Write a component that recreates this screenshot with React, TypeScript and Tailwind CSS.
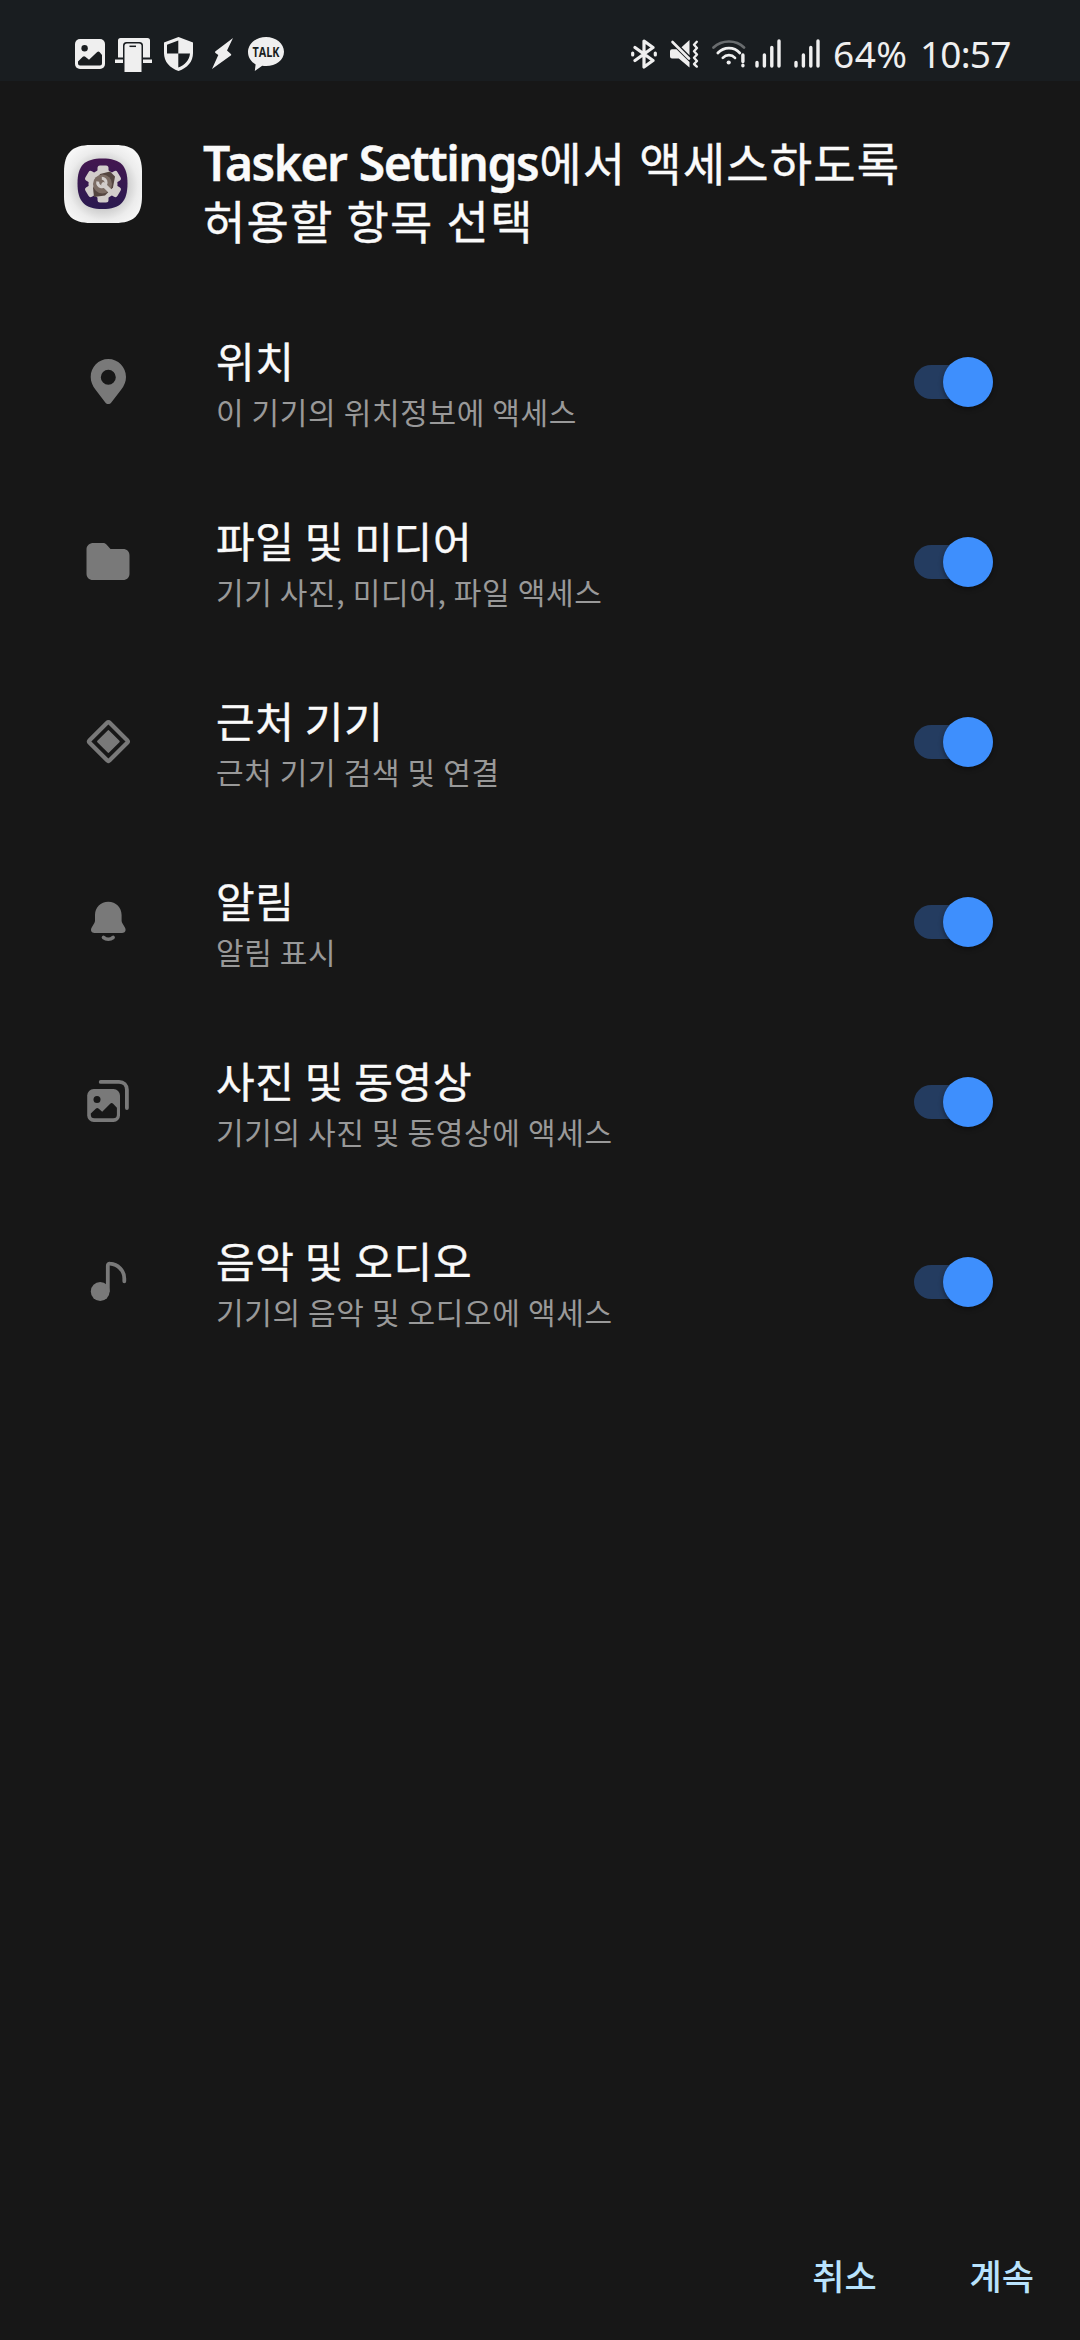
import { useState } from 'react';
import type { ReactNode } from 'react';

type Permission = {
  id: string;
  title: string;
  description: string;
  icon: ReactNode;
};

const permissions: Permission[] = [
  {
    id: 'location',
    title: '위치',
    description: '이 기기의 위치정보에 액세스',
    icon: (
      <svg className="h-12 w-12" viewBox="0 0 48 48" fill="#797979">
        <path
          fillRule="evenodd"
          d="M24.300 1C14.500 1 6.700 9 6.700 19c0 4.700 1.900 8.700 4.700 12.600L21.300 44.500c1.600 2 4.400 2 6 0l10-12.900C40.100 27.700 42 23.700 42 19 42 9 34.100 1 24.300 1Zm0 10.700a7.500 7.500 0 1 1 0 15 7.500 7.500 0 0 1 0-15Z"
        />
      </svg>
    ),
  },
  {
    id: 'files',
    title: '파일 및 미디어',
    description: '기기 사진, 미디어, 파일 액세스',
    icon: (
      <svg className="h-12 w-12" viewBox="0 0 48 48" fill="#797979">
        <path d="M9.500 5H19c1.300 0 2.300.400 3.200 1.300L26.500 11H39c4 0 6.500 2.500 6.500 6.500V35.500c0 4-2.500 6.500-6.500 6.500H9c-4 0-6.500-2.500-6.500-6.500v-24C2.500 7.500 5.500 5 9.500 5Z" />
      </svg>
    ),
  },
  {
    id: 'nearby',
    title: '근처 기기',
    description: '근처 기기 검색 및 연결',
    icon: (
      <svg className="h-12 w-12" viewBox="0 0 48 48" fill="#797979">
        <rect x="10.200" y="9.300" width="28.400" height="28.400" rx="1.800" transform="rotate(45 24.400 23.500)" fill="none" stroke="#797979" strokeWidth="4.200" />
        <rect x="16.100" y="15.200" width="16.600" height="16.600" rx="1" transform="rotate(45 24.400 23.500)" />
      </svg>
    ),
  },
  {
    id: 'notifications',
    title: '알림',
    description: '알림 표시',
    icon: (
      <svg className="h-12 w-12" viewBox="0 0 48 48" fill="#797979">
        <path d="M24.300 3.700c-7.600 0-13.300 5.700-13.300 13.300v5.500c0 1-.300 1.900-.800 2.800l-2.500 4.200c-1.600 2.700-.300 5.500 2.800 5.500h27.600c3.100 0 4.400-2.800 2.800-5.500l-2.500-4.200c-.500-.900-.800-1.800-.800-2.800V17c0-7.600-5.700-13.300-13.300-13.300Z" />
        <path d="M19.500 39.500c2.800 2.300 6.800 2.300 9.600 0" fill="none" stroke="#797979" strokeWidth="3.600" strokeLinecap="round" />
      </svg>
    ),
  },
  {
    id: 'photos',
    title: '사진 및 동영상',
    description: '기기의 사진 및 동영상에 액세스',
    icon: (
      <svg className="h-12 w-12" viewBox="0 0 48 48" fill="#797979">
        <path d="M16.700 3.900H35c4.800 0 7.900 3.100 7.900 7.900v18.300" fill="none" stroke="#797979" strokeWidth="3.800" strokeLinecap="round" />
        <rect x="3.200" y="11" width="32.800" height="33" rx="6.500" />
        <circle cx="13" cy="21.400" r="3.500" fill="#171717" />
        <path
          d="M6.800 35.500l5.200-4.900c.800-.800 1.700-.800 2.500 0l3.700 3.100 8-8c.900-.900 2-.900 2.900 0l3.800 4v7c0 2.400-1.200 3.600-3.600 3.600H10.400c-2.400 0-3.600-1.200-3.600-3.600Z"
          fill="#171717"
        />
      </svg>
    ),
  },
  {
    id: 'music',
    title: '음악 및 오디오',
    description: '기기의 음악 및 오디오에 액세스',
    icon: (
      <svg className="h-12 w-12" viewBox="0 0 48 48" fill="#797979">
        <circle cx="16.200" cy="33.500" r="9.400" />
        <path d="M23.800 33V7.700c0-1.400.800-2.200 2.200-2C34 6.300 40.300 12.500 40.300 20.500v2.800" fill="none" stroke="#797979" strokeWidth="3.800" strokeLinecap="round" strokeLinejoin="round" />
      </svg>
    ),
  },
];

function Signal() {
  return (
    <svg className="h-[30px] w-[26px]" viewBox="0 0 26 30" stroke="#efefef" strokeWidth="3.400" strokeLinecap="round">
      <path d="M2 23.500v3.500M9.400 16v11M16.800 8.500V27M24 2v25" />
    </svg>
  );
}

function StatusBar() {
  return (
    <div className="flex h-[81px] shrink-0 items-start justify-between bg-[#191d20] pt-[36px] pr-[69px] pl-[75px]">
      <div className="flex h-[36px] items-center">
        <svg className="h-[30px] w-[30px]" viewBox="0 0 30 30">
          <rect width="30" height="30" rx="5" fill="#efefef" />
          <circle cx="9.600" cy="9.300" r="3.200" fill="#191d20" />
          <path d="M3 22.500l4.800-4.700c.8-.8 1.700-.8 2.500 0l3.700 3 8.200-7.800c.8-.8 1.600-.8 2.300 0L27 16v8.500a2 2 0 0 1-2 2H5a2 2 0 0 1-2-2Z" fill="#191d20" />
        </svg>
        <svg className="ml-[10px] h-[36px] w-[37px]" viewBox="0 0 37 36" fill="#efefef">
          <path d="M3 21.500V4.500A2.500 2.500 0 0 1 5.500 2h27A2.500 2.500 0 0 1 35 4.500v17h-7V9.500a3.500 3.500 0 0 0-3.500-3.500h-13A3.500 3.500 0 0 0 8 9.500v12Z" />
          <path d="M0 23.500h8v3.500H0ZM28 23.500h9v3.500h-9Z" />
          <path d="M9.500 36V10a2.500 2.500 0 0 1 2.500-2.500h12a2.500 2.500 0 0 1 2.500 2.500v26Z" />
          <path d="M14.500 10.300h6.500" stroke="#191d20" strokeWidth="1.500" />
        </svg>
        <svg className="ml-3 h-[36px] w-[29px]" viewBox="0 0 29 36">
          <path d="M14.500 1 L29 6.500V17c0 8.500-5.500 15-14.500 18C5.500 32 0 25.500 0 17V6.500Z" fill="#efefef" />
          <path d="M14.300 4.500V17.500H3V8.800ZM14.300 17.500H26c-.7 6.800-5 11.500-11.700 14Z" fill="#191d20" />
        </svg>
        <svg className="ml-[19px] h-[32px] w-[21px]" viewBox="0 0 21 32" fill="#efefef">
          <path d="M21 0 3.500 13.200c-.7.500-.6 1.200 0 1.700L6.300 17 0 31 18.800 17.600c.6-.5.600-1.100.1-1.600L15 12.500Z" />
        </svg>
        <svg className="ml-[15px] h-[36px] w-[36px]" viewBox="0 0 36 36">
          <path d="M18 1C8 1 0 7.500 0 16c0 5.500 3.200 9.800 7.600 12.400L6.800 35l7.400-5.200c1.200.2 2.500.3 3.800.3 10 0 18-6 18-14.300S28 1 18 1Z" fill="#efefef" />
          <text x="18" y="20.500" textAnchor="middle" textLength="27" lengthAdjust="spacingAndGlyphs" fill="#191d20" className="font-['Open_Sans',sans-serif] text-[13.500px] font-bold">
            TALK
          </text>
        </svg>
      </div>
      <div className="flex h-[36px] items-center">
        <svg className="h-[30px] w-[26px]" viewBox="0 0 26 30" fill="none" stroke="#efefef" strokeWidth="3.200" strokeLinejoin="round" strokeLinecap="round">
          <path d="M4 8.500 22 21.500 13 28V2l9 6.500L4 21.500" />
          <path d="M1.700 14v2M24.300 14v2" />
        </svg>
        <svg className="ml-[13px] h-[30px] w-[29px]" viewBox="0 0 29 30" fill="#efefef">
          <path d="M2 10.300h4.500L19.500 23v5.500L8.800 19.500H2a2 2 0 0 1-2-2v-5.200a2 2 0 0 1 2-2ZM11.500 8.300l8-7.300v15.300Z" />
          <path d="M2.500 3 19 19.500" stroke="#efefef" strokeWidth="2.600" strokeLinecap="round" />
          <path d="m26.800 2.800-2.800 3 3 3.200-3 3.300 3 3.200-3 3.300 3 3.200-3 3 2.800 2.600" fill="none" stroke="#efefef" strokeWidth="2.400" strokeLinecap="round" strokeLinejoin="round" />
        </svg>
        <svg className="ml-[13px] h-[30px] w-[34px]" viewBox="0 0 34 30" fill="none" stroke="#efefef" strokeWidth="2.700" strokeLinecap="round">
          <path d="M1.500 8.500c8.500-8 22.500-8 30.500 0" stroke="#696c6e" />
          <path d="M5.800 14c6.200-6.600 16.200-6.600 22 0M10.800 18.900c3.500-3.600 8.800-3.600 12.200 0" />
          <circle cx="16.700" cy="23.500" r="2.100" fill="#efefef" stroke="none" />
          <path d="M30.900 16v6.500M30.900 26.300v.4" strokeWidth="3.400" />
        </svg>
        <div className="ml-[9px]">
          <Signal />
        </div>
        <div className="ml-[13px]">
          <Signal />
        </div>
        <span className="ml-[13px] w-[87px] font-['Noto_Sans',sans-serif] text-[37px] leading-[36px] tracking-[0.500px] text-[#efefef]">64%</span>
        <span className="w-[91px] font-['Noto_Sans',sans-serif] text-[37px] leading-[36px] tracking-[-0.800px] text-[#efefef]">10:57</span>
      </div>
    </div>
  );
}

function AppIcon() {
  return (
    <svg className="h-[78px] w-[78px] shrink-0" viewBox="0 0 78 78">
      <defs>
        <radialGradient id="plate" cx="50%" cy="52%" r="62%">
          <stop offset="50%" stopColor="#cfcfcf" />
          <stop offset="72%" stopColor="#ececec" />
          <stop offset="100%" stopColor="#fafafa" />
        </radialGradient>
        <linearGradient id="badge" x1="0" y1="0" x2="0" y2="1">
          <stop offset="0%" stopColor="#431650" />
          <stop offset="100%" stopColor="#2a1a50" />
        </linearGradient>
      </defs>
      <path d="M27 0H51C70 0 78 8 78 27V51C78 70 70 78 51 78H27C8 78 0 70 0 51V27C0 8 8 0 27 0Z" fill="url(#plate)" />
      <path d="M38.500 13.500c18 0 25 7 25 25s-7 25.500-25 25.500-25-7.500-25-25.500 7-25 25-25Z" fill="url(#badge)" />
      <g fill="#d2cdcb">
        <circle cx="39" cy="39" r="14.500" />
        {[0, 60, 120, 180, 240, 300].map((angle) => (
          <rect key={angle} x="33.500" y="20.500" width="11" height="12" rx="2.500" transform={`rotate(${angle} 39 39)`} />
        ))}
      </g>
      <path d="M36 29 46 26.500l5 5-2 11-8 8-11 1.500-1-9Z" fill="#544540" />
      <circle cx="38.500" cy="39" r="9.500" fill="#7c6c64" />
      <path d="m39.500 39.500 7.500 7.500" stroke="#d2cdcb" strokeWidth="4.500" strokeLinecap="round" />
      <path d="M33.800 36.500a4.200 4.200 0 1 0 4-3.200" fill="none" stroke="#d2cdcb" strokeWidth="3" />
    </svg>
  );
}

function Toggle({ checked, label, onChange }: { checked: boolean; label: string; onChange: () => void }) {
  return (
    <button
      type="button"
      role="switch"
      aria-checked={checked}
      aria-label={label}
      onClick={onChange}
      className={`flex h-[34px] w-[79px] items-center rounded-full ${checked ? 'justify-end bg-[#243c60]' : 'justify-start bg-[#4a4a4a]'}`}
    >
      <span className={`h-[50px] w-[50px] shrink-0 rounded-full shadow-[0_2px_5px_rgba(0,0,0,0.4)] ${checked ? 'bg-[#3e8ffd]' : 'bg-[#bdbdbd]'}`} />
    </button>
  );
}

export default function App() {
  const [enabled, setEnabled] = useState<Record<string, boolean>>(
    Object.fromEntries(permissions.map((p) => [p.id, true]))
  );

  const toggle = (id: string) => setEnabled((prev) => ({ ...prev, [id]: !prev[id] }));

  return (
    <div className="flex h-[2340px] w-[1080px] flex-col overflow-hidden bg-[#171717] font-['Noto_Sans_CJK_KR',sans-serif]">
      <StatusBar />

      <header className="flex h-[211px] shrink-0 items-start pt-16 pl-16">
        <AppIcon />
        <h1 className="-mt-3 ml-[61px] text-[46px] leading-[57px] font-normal tracking-[1.200px] text-[#fafafa] [word-spacing:1.5px] [-webkit-text-stroke:0.4px]">
          <span className="mr-px font-['Noto_Sans',sans-serif] text-[48px] leading-[57px] font-semibold tracking-[-1.500px] whitespace-nowrap">
            Tasker Settings
          </span>
          에서 액세스하도록
          <br />
          허용할 항목 선택
        </h1>
      </header>

      <ul className="flex flex-col">
        {permissions.map((p) => (
          <li key={p.id} className="flex h-[180px] items-center pr-[87px] pl-[84px]">
            {p.icon}
            <div className="ml-[84px] flex-1 pt-1">
              <p className="text-[42px] leading-[52px] tracking-[0.700px] text-[#fafafa] [-webkit-text-stroke:0.4px]">{p.title}</p>
              <p className="mt-[2px] text-[30px] leading-[46px] tracking-[0.650px] text-[#999999]">{p.description}</p>
            </div>
            <Toggle checked={enabled[p.id]} label={p.title} onChange={() => toggle(p.id)} />
          </li>
        ))}
      </ul>

      <footer className="mt-auto flex justify-end gap-[93px] pr-[46px] pb-[39px]">
        <button type="button" className="text-[35px] leading-[52px] font-medium text-[#b9e3fd]">취소</button>
        <button type="button" className="text-[35px] leading-[52px] font-medium text-[#b9e3fd]">계속</button>
      </footer>
    </div>
  );
}
